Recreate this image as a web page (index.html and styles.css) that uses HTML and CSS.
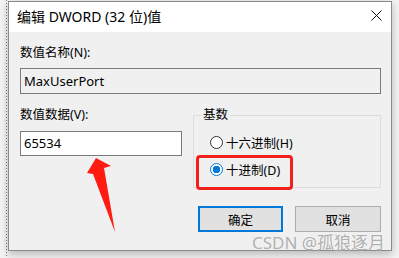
FILE: index.html
```html
<!DOCTYPE html>
<html lang="zh-CN">
<head>
    <meta charset="UTF-8">
    <title>编辑 DWORD (32 位)值</title>
    <link rel="stylesheet" href="styles.css">
</head>
<body>
    <div class="dialog">
        <div class="titlebar">
            <span class="title">编辑 DWORD (32 位)值</span>
            <svg class="close" width="11" height="11" viewBox="0 0 11 11">
                <path d="M0.5 0.5 L10.5 10.5 M10.5 0.5 L0.5 10.5" stroke="#111" stroke-width="1"/>
            </svg>
        </div>
        <div class="content">
            <div class="label">数值名称(N):</div>
            <div class="field readonly">MaxUserPort</div>
            <div class="lower">
                <div class="col">
                    <div class="label">数值数据(V):</div>
                    <div class="field small">65534</div>
                </div>
                <fieldset class="group">
                    <legend>基数</legend>
                    <div class="radio"><span class="dot"></span>十六进制(H)</div>
                    <div class="radio"><span class="dot on"></span>十进制(D)</div>
                    <div class="mark"></div>
                </fieldset>
            </div>
            <div class="buttons">
                <button class="btn primary">确定</button>
                <button class="btn">取消</button>
            </div>
        </div>
    </div>

    <svg class="arrow" width="399" height="258" viewBox="0 0 399 258">
        <polygon points="96,158 111,166 104,168 115,232 93,174 87,173" fill="#ff1a12"/>
    </svg>
    <div class="watermark">CSDN @孤狼逐月</div>
</body>
</html>
```

FILE: styles.css
```css
html, body {
    margin: 0;
    width: 399px;
    height: 258px;
    overflow: hidden;
}
body {
    position: relative;
    font-family: "Noto Sans", "Noto Sans CJK SC", sans-serif;
    background-color: #f3f3f3;
    background-image: repeating-linear-gradient(to bottom, #777 0, #777 1px, transparent 1px, transparent 3px);
    background-size: 1px 100%;
    background-position: 6px 0;
    background-repeat: no-repeat;
    padding: 1px 0 0 8px;
    box-sizing: border-box;
}
.dialog {
    width: 384px;
    height: 250px;
    box-sizing: border-box;
    border: 1px solid #8a8a8a;
    background: #f0f0f0;
    box-shadow: 0 3px 8px rgba(0, 0, 0, 0.25);
}
.titlebar {
    height: 30px;
    background: #fff;
    display: flex;
    align-items: center;
    justify-content: space-between;
    padding: 0 9px 0 8px;
}
.title {
    font-size: 14px;
    color: #000;
    margin-top: -2px;
}
.close {
    margin-top: -3px;
}
.content {
    padding: 13px 10px 0 11px;
}
.label {
    font-size: 12.5px;
    line-height: 16px;
    color: #000;
}
.field {
    margin-top: 7px;
    height: 26px;
    box-sizing: border-box;
    border: 1px solid #7a7a7a;
    font-size: 13px;
    line-height: 24px;
    padding-left: 3px;
    background: #fff;
}
.readonly {
    background: #f0f0f0;
}
.small {
    margin-top: 8px;
    height: 25px;
    line-height: 23px;
}
.lower {
    display: grid;
    grid-template-columns: 162px 188px;
    column-gap: 11px;
    align-items: start;
    margin-top: 13px;
}
.group {
    position: relative;
    margin: 0;
    padding: 10px 0 0 16px;
    height: 81px;
    box-sizing: border-box;
    border: 1px solid #dcdcdc;
    display: flex;
    flex-direction: column;
    gap: 9px;
}
.group legend {
    font-size: 12.5px;
    line-height: 16px;
    padding: 0 2px;
    margin-left: -9px;
}
.radio {
    display: flex;
    align-items: center;
    height: 18px;
    font-size: 12.5px;
    gap: 3px;
}
.dot {
    width: 13px;
    height: 13px;
    box-sizing: border-box;
    border: 1px solid #333;
    border-radius: 50%;
    background: #fff;
}
.dot.on {
    border-color: #0078d7;
    background: radial-gradient(circle, #0078d7 0, #0078d7 3.5px, #fff 4px);
}
.mark {
    position: absolute;
    left: 2px;
    top: 32px;
    width: 97px;
    height: 35px;
    box-sizing: border-box;
    border: 3px solid #f0201a;
    border-radius: 4px;
}
.buttons {
    display: flex;
    justify-content: flex-end;
    gap: 12px;
    margin-top: 18px;
}
.btn {
    width: 86px;
    height: 26px;
    box-sizing: border-box;
    border: 1px solid #adadad;
    background: #e1e1e1;
    font-family: inherit;
    font-size: 12.5px;
    color: #000;
    padding: 0;
}
.btn.primary {
    width: 85px;
    border: 2px solid #0078d7;
}
.arrow {
    position: absolute;
    left: 0;
    top: 0;
    pointer-events: none;
}
.watermark {
    position: absolute;
    left: 252px;
    top: 229px;
    font-size: 17px;
    color: rgba(110, 110, 110, 0.55);
    text-shadow: 0 0 1px rgba(255, 255, 255, 0.8);
    white-space: nowrap;
}
```
